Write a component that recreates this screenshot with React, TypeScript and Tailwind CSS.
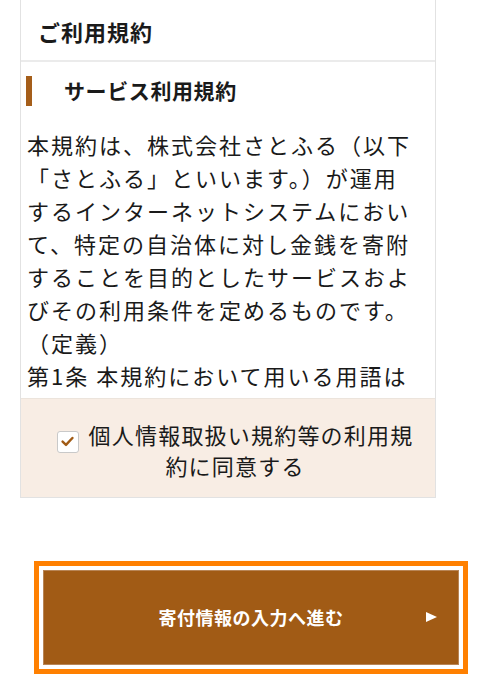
import { useState } from "react";

const termsLines = [
  "本規約は、株式会社さとふる（以下",
  "「さとふる」といいます。）が運用",
  "するインターネットシステムにおい",
  "て、特定の自治体に対し金銭を寄附",
  "することを目的としたサービスおよ",
  "びその利用条件を定めるものです。",
  "（定義）",
  "第1条 本規約において用いる用語は",
  "、次の各号に定める意味で使用する",
  "ものとします。",
];

function CheckIcon() {
  return (
    <svg width="13" height="11" viewBox="0 0 13 11" fill="none">
      <path
        d="M1.6 5.6 L5 8.9 L11.4 2"
        stroke="#a15b15"
        strokeWidth="2.4"
        strokeLinecap="round"
        strokeLinejoin="round"
      />
    </svg>
  );
}

export default function App() {
  const [agreed, setAgreed] = useState(true);

  return (
    <div className="min-h-[687px] w-[500px] bg-white font-['Noto_Sans_CJK_JP','Noto_Sans',sans-serif] text-[#1a1a1a]">
      {/* terms card */}
      <div className="ml-[20px] w-[416px] border-x border-b border-[#e2e2e2]">
        <div className="flex h-[62px] items-center border-b-2 border-[#ebebeb] pl-[17px] pt-[2px]">
          <h1 className="text-[22px] font-bold tracking-[1px]">ご利用規約</h1>
        </div>

        <div className="h-[336px] overflow-hidden">
          <div className="mt-[13px] flex items-center">
            <span className="ml-[5px] h-[30px] w-[6px] bg-[#a55e1a]" />
            <h2 className="ml-[32px] text-[21px] font-bold tracking-[0.6px]">
              サービス利用規約
            </h2>
          </div>
          <div className="mt-[21px] pl-[6px] text-[22px] leading-[33px] tracking-[2px]">
            {termsLines.map((line, i) => (
              <p key={i} className="whitespace-nowrap">
                {line}
              </p>
            ))}
          </div>
        </div>

        <label className="block cursor-pointer border-t border-[#ece4dc] bg-[#f8ede4] pb-[17px] pl-[35px] pr-[21px] pt-[20px] text-center text-[22px] leading-[30px] tracking-[1.2px]">
          <input
            type="checkbox"
            className="sr-only"
            checked={agreed}
            onChange={(e) => setAgreed(e.target.checked)}
          />
          <span className="mr-[10px] inline-flex h-[22px] w-[22px] translate-y-[3px] items-center justify-center rounded-[3px] border border-[#c9c9c9] bg-white align-baseline">
            {agreed && <CheckIcon />}
          </span>
          個人情報取扱い規約等の利用規約に同意する
        </label>
      </div>

      {/* submit button */}
      <div className="ml-[34px] mt-[63px] w-[434px] border-[5px] border-[#ff8000] bg-white p-[4px]">
        <button className="relative flex h-[95px] w-full items-center justify-center border border-[#b88556] bg-[#a15b15] text-[18px] font-bold tracking-[0.5px] text-white">
          寄付情報の入力へ進む
          <span className="absolute right-[21px] top-1/2 -translate-y-1/2">
            <svg width="11" height="10" viewBox="0 0 11 10">
              <path d="M0 0 L11 5 L0 10 Z" fill="#ffffff" />
            </svg>
          </span>
        </button>
      </div>
    </div>
  );
}
